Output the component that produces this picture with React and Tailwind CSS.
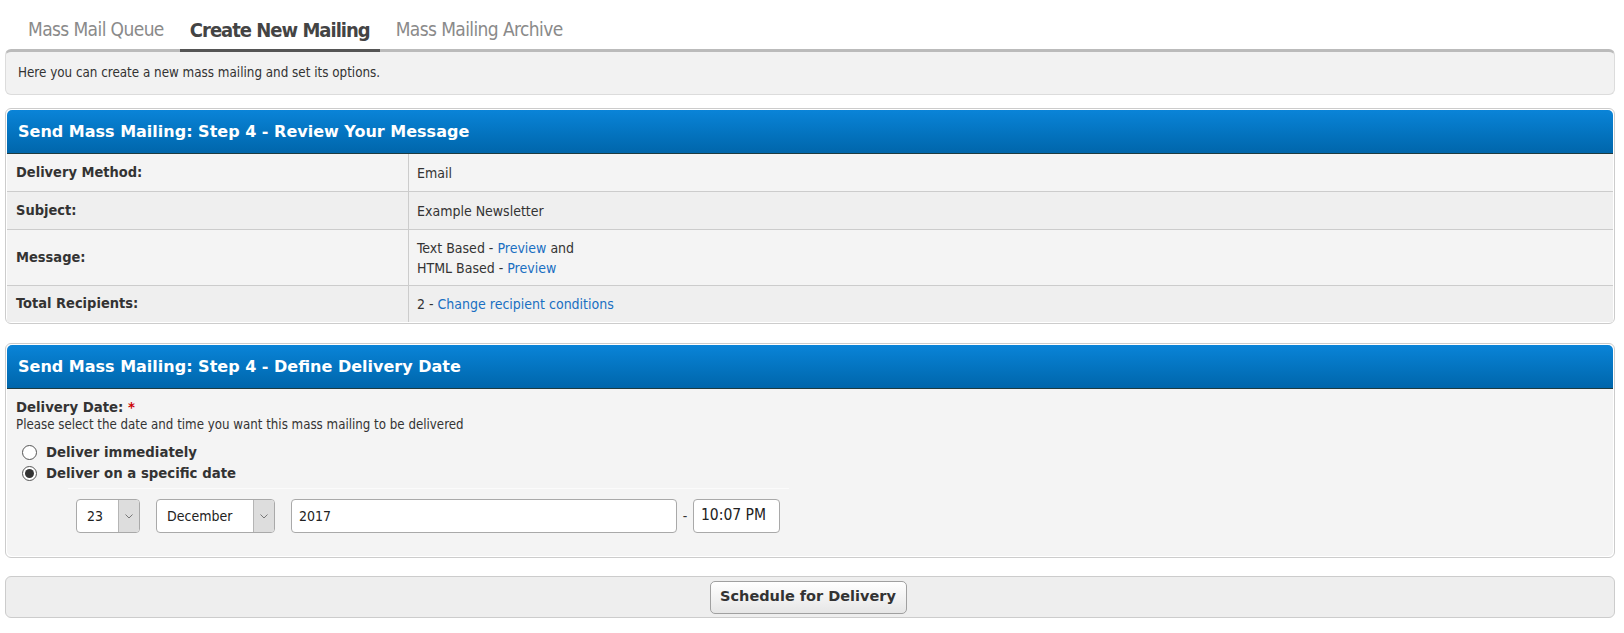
// App.jsx - mass mailing step 4 review screen

function Chevron() {
  return (
    <svg width="8" height="5" viewBox="0 0 8 5" fill="none">
      <path d="M0.5 0.5L4 4L7.5 0.5" stroke="#777" strokeWidth="1" />
    </svg>
  );
}

function SelectBox({ value, className }) {
  return (
    <div
      className={
        "flex h-[34px] items-stretch rounded-[4px] border border-[#a9a9a9] bg-white " +
        className
      }
    >
      <div className="flex flex-1 items-center pl-[10px] text-[14px] text-[#222]">
        {value}
      </div>
      <div className="flex w-[21px] items-center justify-center rounded-r-[3px] border-l border-[#b5b5b5] bg-[#dddddd]">
        <Chevron />
      </div>
    </div>
  );
}

function Radio({ checked, label }) {
  return (
    <div className="flex h-[21px] items-center">
      <span className="ml-[15px] mr-[9px] flex h-[15px] w-[15px] items-center justify-center rounded-full border border-[#555] bg-white">
        {checked && <span className="h-[9px] w-[9px] rounded-full bg-[#333]" />}
      </span>
      <span className="font-['DejaVu_Sans',sans-serif] text-[13.3px] font-bold text-[#333]">
        {label}
      </span>
    </div>
  );
}

function PanelHeader({ title }) {
  return (
    <div className="flex h-[44px] items-center rounded-t-[5px] border-b border-[#1e3b40] bg-gradient-to-b from-[#0a84d8] to-[#0066ab] pl-[11px]">
      <h2 className="font-['DejaVu_Sans',sans-serif] text-[16px] font-bold text-white">
        {title}
      </h2>
    </div>
  );
}

const rows = [
  { label: "Delivery Method:", bg: "bg-[#f4f4f4]", h: "h-[37px]", value: "Email" },
  { label: "Subject:", bg: "bg-[#efefef]", h: "h-[38px]", value: "Example Newsletter" },
  {
    label: "Message:",
    bg: "bg-[#f4f4f4]",
    h: "h-[56px]",
    value: (
      <>
        Text Based - <a className="text-[#1a6fc2]">Preview</a> and
        <br />
        HTML Based - <a className="text-[#1a6fc2]">Preview</a>
      </>
    ),
  },
  {
    label: "Total Recipients:",
    bg: "bg-[#efefef]",
    h: "h-[37px]",
    value: (
      <>
        2 - <a className="text-[#1a6fc2]">Change recipient conditions</a>
      </>
    ),
  },
];

export default function App() {
  return (
    <div className="min-h-screen bg-white pl-[5px] pr-[9px] font-['DejaVu_Sans_Condensed',sans-serif] text-[#333]">
      {/* Tabs */}
      <div className="relative z-10 flex h-[52px] items-end gap-[6px] pl-[13px]">
        <div className="border-b-[3px] border-transparent px-[10px] pb-[10px] text-[19px] leading-none tracking-[-0.6px] text-[#8a8a8a]">
          Mass Mail Queue
        </div>
        <div className="border-b-[3px] border-[#555] px-[10px] pb-[9px] text-[20px] font-bold leading-none tracking-[-1px] text-[#444]">
          Create New Mailing
        </div>
        <div className="border-b-[3px] border-transparent px-[10px] pb-[10px] text-[19px] leading-none tracking-[-0.6px] text-[#8a8a8a]">
          Mass Mailing Archive
        </div>
      </div>

      {/* Intro */}
      <div className="-mt-[3px] flex h-[46px] items-center rounded-[6px] border border-t-[3px] border-[#dcdcdc] border-t-[#bbbbbb] bg-[#f2f2f2] pl-[12px] text-[13.3px]">
        Here you can create a new mass mailing and set its options.
      </div>

      {/* Step 4 review */}
      <div className="mt-[13px] rounded-[6px] border border-[#cccccc] bg-white p-px">
        <PanelHeader title="Send Mass Mailing: Step 4 - Review Your Message" />
        {rows.map((r, i) => (
          <div
            key={r.label}
            className={
              "flex " + r.h + " " + r.bg + (i > 0 ? " border-t border-[#cccccc]" : "")
            }
          >
            <div className="flex w-[402px] items-center border-r border-[#cccccc] pl-[9px] text-[14.5px] font-bold">
              {r.label}
            </div>
            <div className="flex items-center pl-[8px] text-[14px] leading-[20px]">
              <div>{r.value}</div>
            </div>
          </div>
        ))}
      </div>

      {/* Step 4 delivery date */}
      <div className="mt-[19px] rounded-[6px] border border-[#cccccc] bg-white p-px">
        <PanelHeader title="Send Mass Mailing: Step 4 - Define Delivery Date" />
        <div className="rounded-b-[5px] bg-[#f4f4f4] pb-[23px] pl-[9px] pt-[10px]">
          <div className="font-['DejaVu_Sans',sans-serif] text-[13.3px] font-bold leading-[18px]">
            Delivery Date: <span className="text-[#cc0000]">*</span>
          </div>
          <div className="text-[13.2px] leading-[16px]">
            Please select the date and time you want this mass mailing to be delivered
          </div>
          <div className="-ml-[9px] mt-[9px]">
            <Radio label="Deliver immediately" />
            <Radio checked label="Deliver on a specific date" />
          </div>
          <div className="ml-[52px] mt-[4px] w-[721px] border-t border-[#fbfbfb] pl-[8px] pt-[10px]">
            <div className="flex items-center">
              <SelectBox value="23" className="w-[64px]" />
              <SelectBox value="December" className="ml-[16px] w-[119px]" />
              <div className="ml-[16px] flex h-[34px] w-[386px] items-center rounded-[4px] border border-[#a9a9a9] bg-white pl-[7px] text-[14px] text-[#222]">
                2017
              </div>
              <span className="w-[16px] text-center text-[14px]">-</span>
              <div className="flex h-[34px] w-[87px] items-center rounded-[4px] border border-[#a9a9a9] bg-white pl-[7px] text-[15.5px] text-[#222]">
                10:07 PM
              </div>
            </div>
          </div>
        </div>
      </div>

      {/* Submit */}
      <div className="mt-[18px] flex h-[42px] items-center justify-center rounded-[6px] border border-[#cccccc] bg-[#eeeeee]">
        <button className="-ml-[4px] h-[33px] w-[197px] rounded-[5px] border border-[#a0a0a0] bg-gradient-to-b from-white to-[#e6e6e6] font-['DejaVu_Sans',sans-serif] text-[14.5px] font-bold text-[#333]">
          Schedule for Delivery
        </button>
      </div>
    </div>
  );
}
